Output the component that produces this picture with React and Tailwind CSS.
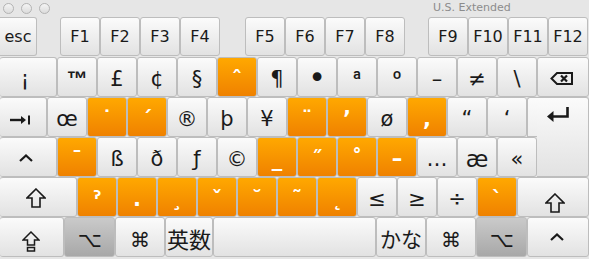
import React from "react";

const tones = {
  light: "bg-linear-to-b from-[#fbfbfb] to-[#e2e2e2] text-[#1a1a1a]",
  orange: "bg-linear-to-b from-[#ffa800] to-[#ef8100] text-white font-bold",
  dark: "bg-linear-to-b from-[#cacaca] to-[#a8a8a8] text-[#1a1a1a]",
};

const Key = ({ w, tone = "light", className = "", children }) => (
  <div
    className={`flex h-[40px] shrink-0 justify-center rounded-[3px] border border-[#bdbdbd] ${w} ${tones[tone]} ${className}`}
  >
    {children}
  </div>
);

// label sitting on a shared baseline, like the keyboard viewer draws it
const Glyph = ({ children, className = "" }) => (
  <span className={`pt-[2px] text-[21px] leading-[38px] ${className}`}>{children}</span>
);

const TabIcon = () => (
  <svg width="21" height="10" viewBox="0 0 21 10" className="mt-[17px] mr-[5px]">
    <path d="M0 5 H13" stroke="#1a1a1a" strokeWidth="2.4" />
    <path d="M11 1 L16 5 L11 9 Z" fill="#1a1a1a" />
    <path d="M19 0.5 V9.5" stroke="#1a1a1a" strokeWidth="2" />
  </svg>
);

const DeleteIcon = () => (
  <svg width="23" height="13" viewBox="0 0 23 13" className="mt-[14px] mr-[4px]">
    <path d="M7 1 H22 V12 H7 L1.5 6.5 Z" fill="none" stroke="#1a1a1a" strokeWidth="2" strokeLinejoin="miter" />
    <path d="M11 3.5 L17 9.5 M17 3.5 L11 9.5" stroke="#1a1a1a" strokeWidth="2.2" />
  </svg>
);

const ReturnIcon = () => (
  <svg width="24" height="15" viewBox="0 0 24 15" className="mt-[9px] mr-[9px]">
    <path d="M21.5 0 V9.5 H6" fill="none" stroke="#1a1a1a" strokeWidth="2.6" />
    <path d="M7.5 4 L1 9.5 L7.5 15 Z" fill="#1a1a1a" />
  </svg>
);

const ShiftIcon = ({ className = "" }) => (
  <svg width="20" height="20" viewBox="0 0 20 20" className={className}>
    <path d="M10 1 L19 10 H14 V19 H6 V10 H1 Z" fill="none" stroke="#1a1a1a" strokeWidth="1.6" strokeLinejoin="miter" />
  </svg>
);

const CapsIcon = () => (
  <svg width="18" height="21" viewBox="0 0 18 21" className="mt-[13px] mr-[2px]">
    <path d="M9 1 L17 9 H12.5 V14 H5.5 V9 H1 Z" fill="none" stroke="#1a1a1a" strokeWidth="1.5" />
    <rect x="5.5" y="16.5" width="7" height="3.5" fill="none" stroke="#1a1a1a" strokeWidth="1.5" />
  </svg>
);

const CtrlIcon = ({ className = "" }) => (
  <svg width="14" height="8" viewBox="0 0 14 8" className={className}>
    <path d="M1 7 L7 1.5 L13 7" fill="none" stroke="#1a1a1a" strokeWidth="2.2" />
  </svg>
);

const FnKey = ({ w = "w-[40px]", className = "", children }) => (
  <div
    className={`flex h-[39px] shrink-0 justify-center rounded-[3px] border border-[#bdbdbd] bg-linear-to-b from-[#fbfbfb] to-[#e2e2e2] text-[16px] leading-[37px] text-[#1a1a1a] ${w} ${className}`}
  >
    {children}
  </div>
);

const row2 = [
  ["œ"],
  ["˙", "orange"],
  ["´", "orange"],
  ["®"],
  ["þ"],
  ["¥"],
  ["¨", "orange"],
  ["’", "orange"],
  ["ø"],
  [",", "orange"],
  ["“"],
  ["‘"],
];

const row3 = [
  ["¯", "orange"],
  ["ß"],
  ["ð"],
  ["ƒ"],
  ["©"],
  ["_", "orange"],
  ["˝", "orange"],
  ["˚", "orange"],
  ["–", "orange"],
  ["…"],
  ["æ"],
  ["«"],
];

const row4 = [
  ["ˀ", "orange"],
  [".", "orange"],
  ["¸", "orange"],
  ["ˇ", "orange"],
  ["˘", "orange"],
  ["˜", "orange"],
  ["˛", "orange"],
  ["≤"],
  ["≥"],
  ["÷"],
  ["`", "orange"],
];

export default function App() {
  return (
    <div className="h-[259px] w-[589px] overflow-hidden bg-[#e6e6e6] font-['DejaVu_Sans',sans-serif] select-none">
      {/* title bar */}
      <div className="flex h-[17px] items-center">
        <div className="ml-[3px] flex gap-[7px]">
          <span className="h-[11px] w-[11px] rounded-full border border-[#b3b3b3] bg-linear-to-b from-[#f4f4f4] to-[#dcdcdc]" />
          <span className="h-[11px] w-[11px] rounded-full border border-[#b3b3b3] bg-linear-to-b from-[#f4f4f4] to-[#dcdcdc]" />
          <span className="h-[11px] w-[11px] rounded-full border border-[#b3b3b3] bg-linear-to-b from-[#f4f4f4] to-[#dcdcdc]" />
        </div>
        <span className="ml-[383px] text-[11px] text-[#8c8c8c]">U.S. Extended</span>
      </div>

      {/* function row */}
      <div className="flex h-[40px]">
        <FnKey w="w-[37px]" className="rounded-l-none border-l-0">esc</FnKey>
        <div className="ml-[23px] flex">
          <FnKey>F1</FnKey>
          <FnKey>F2</FnKey>
          <FnKey>F3</FnKey>
          <FnKey>F4</FnKey>
        </div>
        <div className="ml-[25px] flex">
          <FnKey>F5</FnKey>
          <FnKey>F6</FnKey>
          <FnKey>F7</FnKey>
          <FnKey>F8</FnKey>
        </div>
        <div className="ml-[23px] flex">
          <FnKey>F9</FnKey>
          <FnKey>F10</FnKey>
          <FnKey>F11</FnKey>
          <FnKey>F12</FnKey>
        </div>
      </div>

      {/* number row */}
      <div className="flex h-[40px]">
        <Key w="w-[57px]" className="border-l-0">
          <Glyph className="mr-[6px]">¡</Glyph>
        </Key>
        <Key w="w-[40px]">
          <Glyph className="font-['Liberation_Sans',sans-serif] font-bold">™</Glyph>
        </Key>
        <Key w="w-[40px]"><Glyph>£</Glyph></Key>
        <Key w="w-[40px]"><Glyph>¢</Glyph></Key>
        <Key w="w-[40px]"><Glyph>§</Glyph></Key>
        <Key w="w-[40px]" tone="orange"><Glyph>ˆ</Glyph></Key>
        <Key w="w-[40px]"><Glyph>¶</Glyph></Key>
        <Key w="w-[40px]">
          <span className="pt-[2px] text-[30px] leading-[35px]">•</span>
        </Key>
        <Key w="w-[40px]">
          <Glyph className="font-['Roboto',sans-serif] font-bold">ª</Glyph>
        </Key>
        <Key w="w-[40px]">
          <Glyph className="font-['Roboto',sans-serif] font-bold">º</Glyph>
        </Key>
        <Key w="w-[40px]"><Glyph>–</Glyph></Key>
        <Key w="w-[40px]"><Glyph>≠</Glyph></Key>
        <Key w="w-[40px]"><Glyph>\</Glyph></Key>
        <Key w="w-[52px]">
          <DeleteIcon />
        </Key>
      </div>

      {/* qwerty + home rows with the L-shaped return key */}
      <div className="flex h-[80px]">
        <div className="flex w-[537px] flex-col">
          <div className="flex h-[40px]">
            <Key w="w-[47px]" className="border-l-0">
              <TabIcon />
            </Key>
            {row2.map(([c, tone], i) => (
              <Key key={i} w="w-[40px]" tone={tone}>
                <Glyph>{c}</Glyph>
              </Key>
            ))}
            <div className="h-[40px] w-[10px] shrink-0 rounded-tl-[3px] border-t border-b border-l border-[#bdbdbd] bg-linear-to-b from-[#fbfbfb] to-[#eeeeee]" />
          </div>
          <div className="flex h-[40px]">
            <Key w="w-[57px]" className="border-l-0">
              <CtrlIcon className="mt-[16px] mr-[4px]" />
            </Key>
            {row3.map(([c, tone], i) => (
              <Key key={i} w="w-[40px]" tone={tone}>
                <Glyph className={c === "æ" ? "text-[23px]" : ""}>{c}</Glyph>
              </Key>
            ))}
          </div>
        </div>
        <div className="flex h-[80px] w-[52px] shrink-0 justify-center rounded-r-[3px] border-t border-r border-b border-[#bdbdbd] bg-linear-to-b from-[#fbfbfb] to-[#e2e2e2]">
          <ReturnIcon />
        </div>
      </div>

      {/* bottom letter row */}
      <div className="flex h-[40px]">
        <Key w="w-[77px]" className="border-l-0">
          <ShiftIcon className="mt-[10px] mr-[4px]" />
        </Key>
        {row4.map(([c, tone], i) => (
          <Key key={i} w="w-[40px]" tone={tone}>
            <Glyph>{c}</Glyph>
          </Key>
        ))}
        <Key w="w-[72px]">
          <ShiftIcon className="mt-[15px] ml-[3px]" />
        </Key>
      </div>

      {/* modifier row */}
      <div className="flex h-[40px]">
        <Key w="w-[64px]" className="border-l-0">
          <CapsIcon />
        </Key>
        <Key w="w-[51px]" tone="dark">
          <span className="pt-[5px] text-[21px] leading-[35px]">⌥</span>
        </Key>
        <Key w="w-[50px]">
          <span className="pt-[5px] text-[20px] leading-[35px]">⌘</span>
        </Key>
        <Key w="w-[48px]">
          <span className="pt-[3px] font-['Noto_Sans_CJK_JP',sans-serif] text-[22px] leading-[35px]">英数</span>
        </Key>
        <Key w="w-[163px]" />
        <Key w="w-[50px]">
          <span className="pt-[3px] font-['Noto_Sans_CJK_JP',sans-serif] text-[21px] leading-[35px]">かな</span>
        </Key>
        <Key w="w-[50px]">
          <span className="pt-[5px] text-[20px] leading-[35px]">⌘</span>
        </Key>
        <Key w="w-[51px]" tone="dark">
          <span className="pt-[5px] text-[21px] leading-[35px]">⌥</span>
        </Key>
        <Key w="w-[62px]">
          <CtrlIcon className="mt-[15px] mr-[2px]" />
        </Key>
      </div>
    </div>
  );
}
